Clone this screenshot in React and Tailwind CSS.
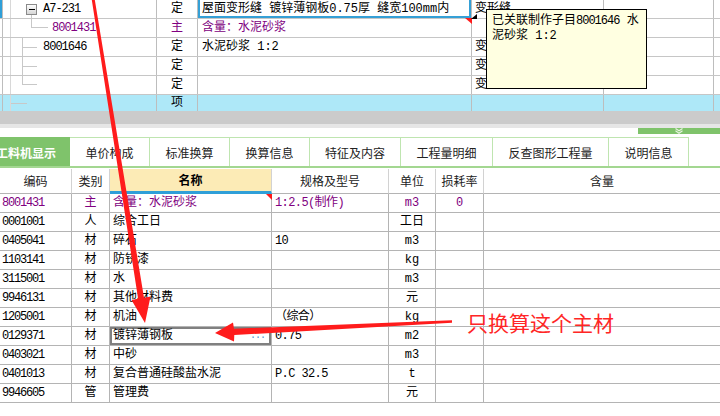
import React from "react";

const topRows = [
  { code: "A7-231", pad: "pl-[32px]", type: "定", name: "屋面变形缝 镀锌薄钢板0.75厚 缝宽100mm内", unit: "变形缝", sel: true },
  { code: "8001431", pad: "pl-[41px]", type: "主", name: "含量：水泥砂浆", unit: "", purple: true },
  { code: "8001646", pad: "pl-[32px]", type: "定", name: "水泥砂浆 1:2", unit: "变形缝" },
  { code: "", pad: "", type: "定", name: "", unit: "变形缝" },
  { code: "", pad: "", type: "定", name: "", unit: "变形缝" },
];

const tabs = [
  ["单价构成", "w-[80px]"],
  ["标准换算", "w-[80px]"],
  ["换算信息", "w-[80px]"],
  ["特征及内容", "w-[91px]"],
  ["工程量明细", "w-[92px]"],
  ["反查图形工程量", "w-[116px]"],
  ["说明信息", "w-[80px]"],
];

const rows = [
  ["8001431", "主", "含量：水泥砂浆", "1:2.5(制作)", "m3", "0"],
  ["0001001", "人", "综合工日", "", "工日", ""],
  ["0405041", "材", "碎石", "10", "m3", ""],
  ["1103141", "材", "防锈漆", "", "kg", ""],
  ["3115001", "材", "水", "", "m3", ""],
  ["9946131", "材", "其他材料费", "", "元", ""],
  ["1205001", "材", "机油", "（综合）", "kg", ""],
  ["0129371", "材", "镀锌薄钢板", "0.75", "m2", ""],
  ["0403021", "材", "中砂", "", "m3", ""],
  ["0401013", "材", "复合普通硅酸盐水泥", "P.C 32.5", "t", ""],
  ["9946605", "管", "管理费", "", "元", ""],
];

function TopGrid() {
  return (
    <div className="relative">
      {topRows.map((r, i) => (
        <div key={i} className={`flex h-[19px] border-b border-[#c6c6c6] ${r.purple ? "text-[#800080]" : "text-black"}`}>
          <div className="w-[3px] border-r border-[#bdbdbd]">
            {r.sel && <div className="w-[2px] h-full bg-[#2f9fd8]" />}
          </div>
          <div className="w-[8px] border-r border-[#d8d8d8]" />
          <div className={`w-[146px] border-r border-[#bdbdbd] flex items-center tracking-[-1px] ${r.pad}`}>{r.code}</div>
          <div className="w-[41px] border-r border-[#bdbdbd] flex items-center justify-center">{r.type}</div>
          <div
            className={`w-[274px] border-r border-[#bdbdbd] flex items-center pl-[4px] whitespace-nowrap overflow-hidden ${
              r.sel ? "shadow-[inset_2px_-2px_0_0_#35a0d6,inset_-2px_0_0_0_#35a0d6]" : ""
            }`}
          >
            {r.name}
          </div>
          <div className="w-[132px] border-r border-[#bdbdbd] flex items-center pl-[3px] whitespace-nowrap overflow-hidden">{r.unit}</div>
          <div className="w-[110px] border-r border-[#bdbdbd]" />
          <div className="flex-1" />
        </div>
      ))}
      <div className="flex h-[16px] bg-[#aee8f8]">
        <div className="w-[3px] border-r border-[#bdbdbd]" />
        <div className="w-[8px] border-r border-[#d8d8d8]" />
        <div className="w-[146px] border-r border-[#bdbdbd]" />
        <div className="w-[41px] border-r border-[#bdbdbd] flex items-center justify-center">项</div>
        <div className="w-[274px] border-r border-[#bdbdbd]" />
        <div className="w-[132px] border-r border-[#bdbdbd]" />
        <div className="w-[110px] border-r border-[#bdbdbd]" />
        <div className="flex-1" />
      </div>
      {/* tree lines */}
      <svg className="absolute left-0 top-0 pointer-events-none" width="160" height="111">
        <g stroke="#c8c8c8" strokeWidth="1" shapeRendering="crispEdges">
          <line x1="31.5" y1="15" x2="31.5" y2="28" />
          <line x1="31.5" y1="27.5" x2="48" y2="27.5" />
          <line x1="22.5" y1="38" x2="22.5" y2="85" />
          <line x1="22" y1="47.5" x2="37" y2="47.5" />
          <line x1="22" y1="66.5" x2="37" y2="66.5" />
          <line x1="22" y1="84.5" x2="37" y2="84.5" />
          <line x1="11" y1="103.5" x2="27" y2="103.5" />
        </g>
        <defs>
          <linearGradient id="bx" x1="0" y1="0" x2="0" y2="1">
            <stop offset="0" stopColor="#ffffff" />
            <stop offset="1" stopColor="#d4d4d4" />
          </linearGradient>
        </defs>
        <rect x="26.5" y="4.5" width="10" height="10" fill="url(#bx)" stroke="#8a8a8a" shapeRendering="crispEdges" />
        <line x1="28.5" y1="9.5" x2="34.5" y2="9.5" stroke="#000" shapeRendering="crispEdges" />
      </svg>
    </div>
  );
}

function Tabs() {
  return (
    <div className="flex h-[31px] border-b-2 border-[#a3d791] font-['Noto_Sans_CJK_SC',sans-serif] text-[12px]">
      <div className="w-[70px] bg-[#7fc36b] text-white font-bold flex items-center justify-end pr-[14px] pt-[2px] overflow-hidden whitespace-nowrap">
        工料机显示
      </div>
      {tabs.map(([t, w]) => (
        <div key={t} className={`${w} border-t border-r border-[#bfe5b0] flex items-center justify-center pt-[2px] text-[#222]`}>
          {t}
        </div>
      ))}
      <div className="flex-1" />
    </div>
  );
}

function Header() {
  const base = "border-r border-[#d2d2d2] border-b border-b-[#b4b4b4] flex items-center justify-center";
  return (
    <div className="flex h-[25px] mt-[1px] font-['Noto_Sans_CJK_SC',sans-serif] text-[12px] text-[#222]">
      <div className={`w-[72px] ${base}`}>编码</div>
      <div className={`w-[38px] ${base}`}>类别</div>
      <div className="w-[162px] border-r border-[#d2d2d2] border-b-[3px] border-b-[#2f9fd8] bg-[#fcebb6] flex items-center justify-center font-bold text-black">
        名称
      </div>
      <div className={`w-[117px] ${base}`}>规格及型号</div>
      <div className={`w-[47px] ${base}`}>单位</div>
      <div className={`w-[48px] ${base}`}>损耗率</div>
      <div className="flex-1 border-b border-[#b4b4b4] flex items-center justify-center">含量</div>
    </div>
  );
}

function Rows() {
  return (
    <div>
      {rows.map((r, i) => {
        const purple = i === 0;
        const sel = i === 7;
        return (
          <div key={r[0]} className={`flex h-[19px] border-b border-[#b4b4b4] ${purple ? "text-[#800080]" : "text-black"}`}>
            <div className="w-[72px] border-r border-[#b4b4b4] flex items-center pl-[2px] tracking-[-1.2px]">{r[0]}</div>
            <div className="w-[38px] border-r border-[#b4b4b4] flex items-center justify-center">{r[1]}</div>
            <div
              className={`w-[162px] border-r border-[#b4b4b4] flex items-center pl-[3px] whitespace-nowrap ${
                sel ? "ring-2 ring-inset ring-[#808080] justify-between pr-[6px]" : ""
              }`}
            >
              <span>{r[2]}</span>
              {sel && <span className="text-[#4a90d0] text-[10px] tracking-[-1px] leading-none pt-[4px]">···</span>}
            </div>
            <div className="w-[117px] border-r border-[#b4b4b4] flex items-center pl-[3px] whitespace-nowrap tracking-[-0.6px]">{r[3]}</div>
            <div className="w-[47px] border-r border-[#b4b4b4] flex items-center justify-center">{r[4]}</div>
            <div className="w-[48px] border-r border-[#b4b4b4] flex items-center justify-center">{r[5]}</div>
            <div className="flex-1" />
          </div>
        );
      })}
    </div>
  );
}

export default function App() {
  return (
    <div className="relative w-[720px] h-[416px] overflow-hidden bg-white text-[12px] font-['Liberation_Mono','Noto_Sans_CJK_SC',monospace]">
      <TopGrid />
      <div className="h-[13px] bg-[#cbcbcb]" />
      <div className="h-[4px] bg-[#e6e6e6]" />
      <div className="h-[9px] flex justify-end">
        <div className="w-[82px] h-[6px] bg-[#7fc36b] flex justify-center">
          <svg width="10" height="6" viewBox="0 0 10 6">
            <polyline points="1.5,0.5 5,2.8 8.5,0.5" fill="none" stroke="#e6f4de" strokeWidth="1.2" />
            <polyline points="1.5,2.8 5,5.2 8.5,2.8" fill="none" stroke="#e6f4de" strokeWidth="1.2" />
          </svg>
        </div>
      </div>
      <Tabs />
      <Header />
      <Rows />

      {/* tooltip */}
      <div className="absolute left-[486px] top-[9px] w-[161px] h-[80px] border border-black bg-[#ffffe1] px-[5px] pt-[4px] leading-[15px] text-black whitespace-nowrap">
        <div>已关联制作子目<span className="tracking-[-1px]">8001646</span> 水</div>
        <div>泥砂浆 1:2</div>
      </div>

      {/* annotation text */}
      <div className="absolute left-[467px] top-[310px] text-[21px] leading-[24px] text-[#ff2626] font-['Noto_Sans_CJK_SC',sans-serif]">
        只换算这个主材
      </div>

      {/* markers and arrows */}
      <svg className="absolute left-0 top-0 pointer-events-none" width="720" height="416">
        <polygon points="465,18 472,18 472,24" fill="#ff1a1a" />
        <polygon points="471,19 477,14 477,19" fill="#000" />
        <polygon points="266,194 272,194 272,200" fill="#ff1a1a" />
        <polygon
          points="91.5,-2 94.5,-2 144,297.8 150.5,296.5 145,323 131.5,300 138.1,298.8"
          fill="#ff1c1c"
        />
        <polygon
          points="452,320.2 234,328.7 233,322.5 215,333 234,341.5 234.3,335 452,322.8"
          fill="#ff1c1c"
        />
      </svg>
    </div>
  );
}
